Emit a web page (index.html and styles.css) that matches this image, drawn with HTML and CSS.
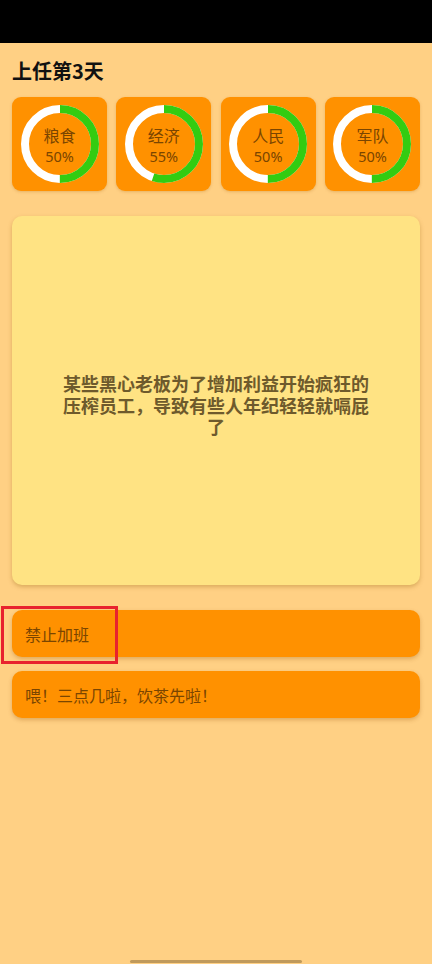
FILE: index.html
```html
<!DOCTYPE html>
<html lang="zh">
<head>
<meta charset="utf-8">
<link rel="stylesheet" href="styles.css">
</head>
<body>
<div class="status"></div>
<main class="page">
  <h1 class="title">上任第3天</h1>
  <div class="stats">
    <div class="stat">
      <svg class="ring" viewBox="0 0 78 78"><circle class="track" cx="39" cy="39" r="35"/><circle class="bar" cx="39" cy="39" r="35" style="stroke-dasharray:109.96 219.91"/></svg>
      <div class="label"><span class="name">粮食</span><span class="pct">50%</span></div>
    </div>
    <div class="stat">
      <svg class="ring" viewBox="0 0 78 78"><circle class="track" cx="39" cy="39" r="35"/><circle class="bar" cx="39" cy="39" r="35" style="stroke-dasharray:120.95 219.91"/></svg>
      <div class="label"><span class="name">经济</span><span class="pct">55%</span></div>
    </div>
    <div class="stat">
      <svg class="ring" viewBox="0 0 78 78"><circle class="track" cx="39" cy="39" r="35"/><circle class="bar" cx="39" cy="39" r="35" style="stroke-dasharray:109.96 219.91"/></svg>
      <div class="label"><span class="name">人民</span><span class="pct">50%</span></div>
    </div>
    <div class="stat">
      <svg class="ring" viewBox="0 0 78 78"><circle class="track" cx="39" cy="39" r="35"/><circle class="bar" cx="39" cy="39" r="35" style="stroke-dasharray:109.96 219.91"/></svg>
      <div class="label"><span class="name">军队</span><span class="pct">50%</span></div>
    </div>
  </div>
  <section class="event">
    <p>某些黑心老板为了增加利益开始疯狂的压榨员工，导致有些人年纪轻轻就嗝屁了</p>
  </section>
  <div class="choices">
    <button class="choice">禁止加班<span class="highlight"></span></button>
    <button class="choice">喂！三点几啦，饮茶先啦！</button>
  </div>
</main>
<div class="home-bar"></div>
</body>
</html>
```
FILE: styles.css
```css
* { box-sizing: border-box; }
html, body {
  margin: 0;
  padding: 0;
  width: 432px;
  height: 964px;
  overflow: hidden;
  background: #ffd084;
  font-family: "Noto Sans CJK SC", "Noto Sans", sans-serif;
  position: relative;
}
.status {
  height: 43px;
  background: #000;
}
.page {
  padding: 0 12px;
}
.title {
  margin: 14px 0 0;
  font-size: 20px;
  line-height: 28px;
  font-weight: 700;
  color: #111;
}
.stats {
  margin-top: 12px;
  display: grid;
  grid-template-columns: repeat(4, 1fr);
  gap: 9.3px;
}
.stat {
  height: 94px;
  background: #ff9100;
  border-radius: 9px;
  box-shadow: 0 1px 3px rgba(160, 90, 0, 0.25);
  display: flex;
  align-items: center;
  justify-content: center;
  position: relative;
}
.ring {
  width: 78px;
  height: 78px;
  transform: rotate(-90deg);
}
.ring circle {
  fill: none;
  stroke-width: 8;
}
.ring .track { stroke: #ffffff; }
.ring .bar { stroke: #33cc11; }
.label {
  position: absolute;
  inset: 0;
  display: flex;
  flex-direction: column;
  align-items: center;
  justify-content: center;
  color: #7a4500;
  padding-top: 2px;
}
.name {
  font-size: 16px;
  line-height: 21px;
}
.pct {
  font-size: 14.5px;
  line-height: 20px;
  font-family: "Noto Sans", sans-serif;
}
.event {
  margin-top: 25px;
  height: 369px;
  background: #ffe383;
  border-radius: 10px;
  box-shadow: 0 2px 4px rgba(150, 100, 20, 0.35);
  display: flex;
  align-items: center;
  justify-content: center;
  padding: 10px 47px 0;
}
.event p {
  margin: 0;
  text-align: center;
  font-size: 18px;
  line-height: 21.5px;
  font-weight: 700;
  color: #6e5a2c;
}
.choices {
  margin-top: 25px;
  display: flex;
  flex-direction: column;
  gap: 14px;
}
.choice {
  position: relative;
  height: 47px;
  border: none;
  background: #ff9100;
  border-radius: 10px;
  box-shadow: 0 2px 4px rgba(150, 80, 0, 0.3);
  text-align: left;
  padding: 0 13px;
  font-family: "Noto Sans CJK SC", sans-serif;
  font-size: 16px;
  color: #7a4500;
}
.highlight {
  position: absolute;
  left: -11px;
  top: -4px;
  width: 117px;
  height: 58px;
  border: 3px solid #e8222e;
}
.home-bar {
  position: absolute;
  left: 130px;
  bottom: 1px;
  width: 172px;
  height: 3px;
  border-radius: 2px;
  background: #c09a5c;
}
```
